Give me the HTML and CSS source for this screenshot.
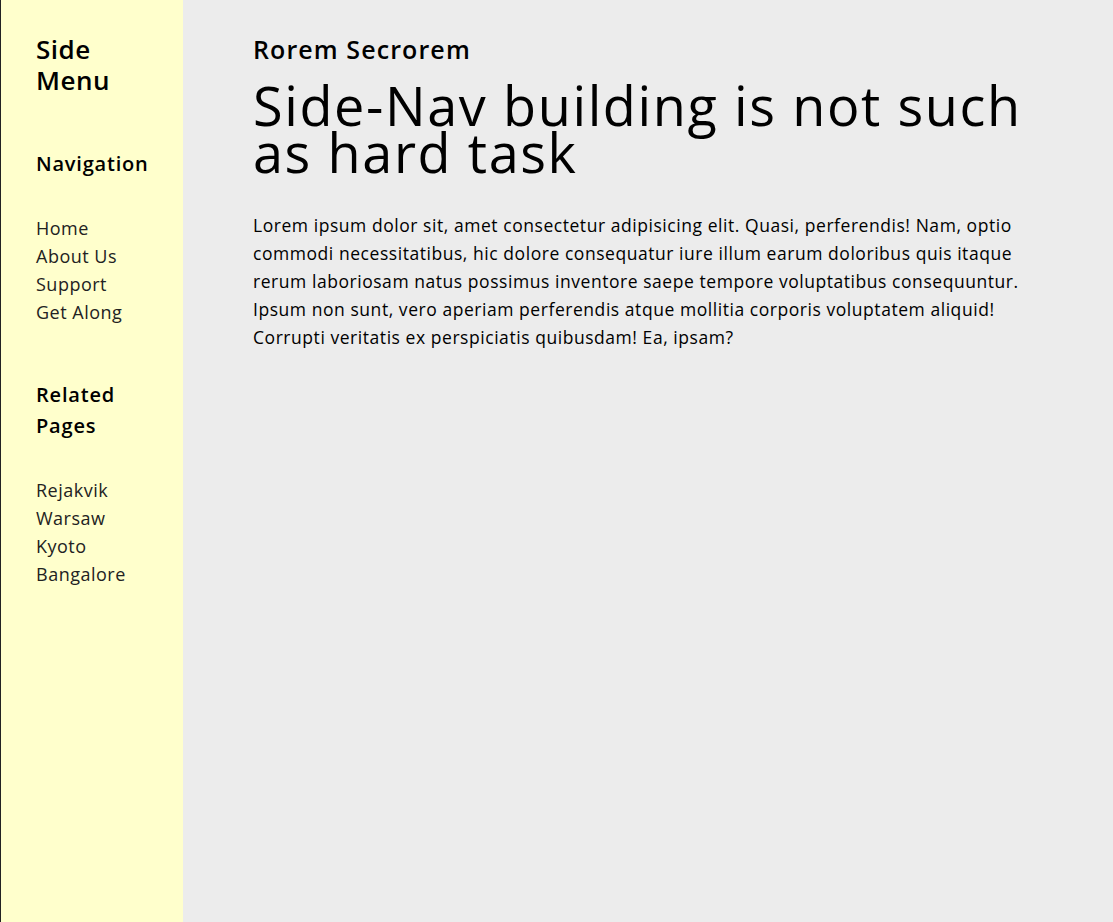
FILE: index.html
```html
<!DOCTYPE html>
<html lang="en">
<head>
<meta charset="utf-8">
<title>Side Nav</title>
<link rel="stylesheet" href="styles.css">
</head>
<body>
<div class="layout">
  <aside class="sidebar">
    <h2 class="brand">Side Menu</h2>
    <h3 class="section-title nav-title">Navigation</h3>
    <ul class="links">
      <li><a href="#">Home</a></li>
      <li><a href="#">About Us</a></li>
      <li><a href="#">Support</a></li>
      <li><a href="#">Get Along</a></li>
    </ul>
    <h3 class="section-title related-title">Related Pages</h3>
    <ul class="links">
      <li><a href="#">Rejakvik</a></li>
      <li><a href="#">Warsaw</a></li>
      <li><a href="#">Kyoto</a></li>
      <li><a href="#">Bangalore</a></li>
    </ul>
  </aside>
  <main class="content">
    <h2 class="kicker">Rorem Secrorem</h2>
    <h1 class="title">Side-Nav building is not such as hard task</h1>
    <p class="text">Lorem ipsum dolor sit, amet consectetur adipisicing elit. Quasi, perferendis! Nam, optio commodi necessitatibus, hic dolore consequatur iure illum earum doloribus quis itaque rerum laboriosam natus possimus inventore saepe tempore voluptatibus consequuntur. Ipsum non sunt, vero aperiam perferendis atque mollitia corporis voluptatem aliquid! Corrupti veritatis ex perspiciatis quibusdam! Ea, ipsam?</p>
  </main>
</div>
</body>
</html>
```

FILE: styles.css
```css
html, body {
  margin: 0;
  padding: 0;
  height: 100%;
}
body {
  font-family: "Open Sans", "DejaVu Sans", sans-serif;
  color: #000;
  background: #ececec;
}
.layout {
  display: flex;
  min-height: 100%;
}
.sidebar {
  box-sizing: border-box;
  width: 183px;
  flex: 0 0 183px;
  background: #ffffcc;
  border-left: 1px solid #222;
  padding: 34px 30px 0 35px;
  display: flex;
  flex-direction: column;
}
.brand {
  margin: 0;
  font-size: 26px;
  line-height: 31px;
  font-weight: 600;
  letter-spacing: 0.5px;
  max-width: 110px;
}
.section-title {
  margin: 0;
  font-size: 20px;
  font-weight: 600;
  letter-spacing: 0.8px;
}
.nav-title {
  line-height: 28px;
  margin-top: 54px;
}
.related-title {
  line-height: 31px;
  margin-top: 53px;
  max-width: 110px;
}
.links {
  list-style: none;
  margin: 36px 0 0 0;
  padding: 0;
}
.links li {
  font-size: 18px;
  line-height: 28px;
  letter-spacing: 0.5px;
}
.links a {
  color: #222;
  text-decoration: none;
}
.related-title + .links {
  margin-top: 35px;
}
.content {
  flex: 1;
  padding: 34px 70px 0 70px;
}
.kicker {
  margin: 0;
  font-size: 25px;
  line-height: 30px;
  font-weight: 600;
  letter-spacing: 1.1px;
}
.title {
  margin: 18px 0 0 0;
  font-size: 54px;
  line-height: 47px;
  font-weight: 500;
  letter-spacing: 1.6px;
}
.text {
  margin: 35px 0 0 0;
  font-size: 17.5px;
  line-height: 28px;
  letter-spacing: 0.55px;
}
```
